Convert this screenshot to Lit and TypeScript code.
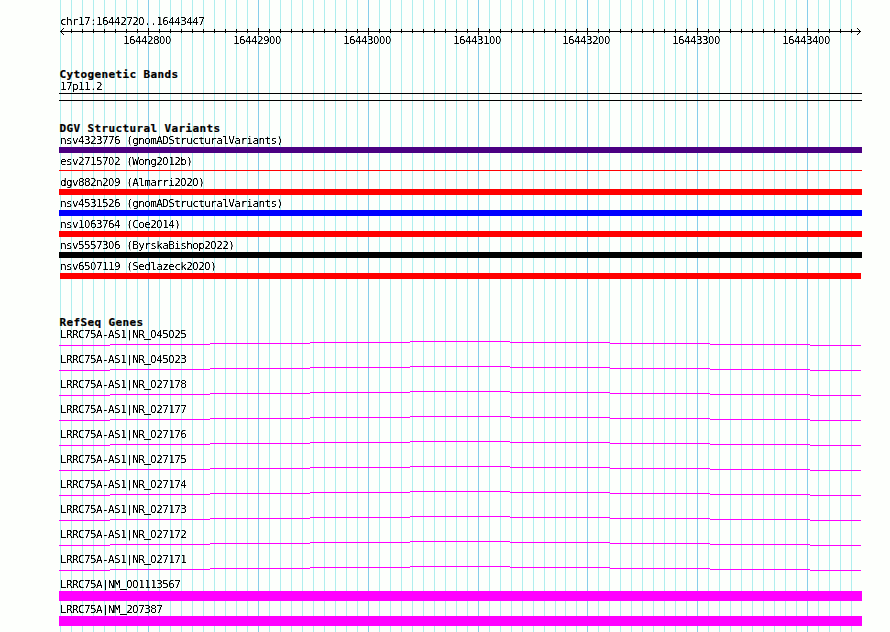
import { LitElement, html, svg, css } from "lit";
import { customElement, property } from "lit/decorators.js";

const GRID = Array.from({ length: 73 }, (_, i) => ({
  x: 60 + 11 * i - (i >= 46 ? 1 : 0),
  major: i % 10 === 8,
}));

const VARIANTS = [
  { name: "nsv4323776 (gnomADStructuralVariants)", kind: "indigo" },
  { name: "esv2715702 (Wong2012b)", kind: "thin" },
  { name: "dgv882n209 (Almarri2020)", kind: "red" },
  { name: "nsv4531526 (gnomADStructuralVariants)", kind: "blue" },
  { name: "nsv1063764 (Coe2014)", kind: "red" },
  { name: "nsv5557306 (ByrskaBishop2022)", kind: "black" },
  { name: "nsv6507119 (Sedlazeck2020)", kind: "red inset" },
];

const TRANSCRIPTS = [
  "045025", "045023", "027178", "027177", "027176",
  "027175", "027174", "027173", "027172", "027171",
].map((id) => "LRRC75A-AS1|NR_" + id);

const GENES = ["LRRC75A|NM_001113567", "LRRC75A|NM_207387"];

// Plain (undotted) zeros and solid underscores inside monospaced text.
const plain = (text: string) =>
  text.split(/([0_])/).filter(Boolean).map((p) =>
    p === "0" ? html`<span class="zero">0</span>` : p === "_" ? html`<span class="under">_</span>` : p);

const textStyles = css`
  .label {
    font: 11px/13px "DejaVu Sans Mono", monospace;
    letter-spacing: -0.61px;
    color: #000;
    white-space: pre;
    height: 13px;
    filter: url(#crisp);
  }
  .zero {
    font-family: "DejaVu Sans";
    font-stretch: condensed;
    letter-spacing: -0.3px;
  }
  .under {
    font-weight: bold;
    position: relative;
    top: -1px;
  }
`;

const crisp = svg`<filter id="crisp" x="0" y="-0.2" width="1" height="1.4" color-interpolation-filters="sRGB">
  <feComponentTransfer><feFuncA type="linear" slope="3" intercept="-0.95"></feFuncA></feComponentTransfer>
</filter>`;

@customElement("scale-ruler")
export class ScaleRuler extends LitElement {
  static styles = [textStyles, css`
    :host { display: block; height: 53px; }
    .defs { position: absolute; }
    .region { padding-left: 60px; }
    .axis { display: block; }
    .numbers { display: flex; padding-left: 123px; }
    .number { width: 110px; flex: none; }
    .number.short { width: 109px; }
  `];
  render() {
    const majors = GRID.filter((g) => g.major);
    return html`
      <svg class="defs" width="0" height="0">${crisp}</svg>
      <div class="label region">${plain("chr17:16442720..16443447")}</div>
      <svg class="axis" width="890" height="6" viewBox="0 28 890 6" overflow="visible" shape-rendering="crispEdges">
        <rect x="60" y="31" width="801" height="1"></rect>
        ${GRID.slice(1).map((g) => g.major
          ? svg`<rect x=${g.x} y="28" width="1" height="7"></rect>`
          : svg`<rect x=${g.x} y="29" width="1" height="4"></rect>`)}
        <path d="M61 30h1v1h-1zM62 29h1v1h-1zM63 28h1v1h-1zM61 32h1v1h-1zM62 33h1v1h-1zM63 34h1v1h-1z"></path>
        <path d="M859 30h1v1h-1zM858 29h1v1h-1zM857 28h1v1h-1zM859 32h1v1h-1zM858 33h1v1h-1zM857 34h1v1h-1z"></path>
      </svg>
      <div class="numbers">
        ${majors.map((_, i) => html`<div class="label number ${i === 3 ? "short" : ""}">${plain(String(16442800 + i * 100))}</div>`)}
      </div>`;
  }
}

@customElement("track-section")
export class TrackSection extends LitElement {
  @property() heading = "";
  static styles = [textStyles, css`
    :host { display: block; width: 803px; }
    .title {
      font: bold 11px/13px "DejaVu Sans Mono", monospace;
      letter-spacing: 0.378px;
      height: 12px;
      padding-left: 0.6px;
      white-space: pre;
      -webkit-text-stroke: 0.2px #000;
    }
  `];
  render() {
    return html`<div class="title">${this.heading}</div><slot></slot>`;
  }
}

@customElement("app-root")
export class AppRoot extends LitElement {
  static styles = [textStyles, css`
    :host {
      display: block;
      position: relative;
      width: 890px;
      height: 632px;
      overflow: hidden;
      background: #fdfffc;
    }
    .grid { position: absolute; inset: 0; }
    .minor { fill: #afeeee; }
    .major { fill: #87ceeb; }
    .content { position: relative; display: flex; flex-direction: column; padding-top: 15px; }
    track-section { margin-left: 59px; }
    .cyto { height: 54px; }
    .dgv { height: 194px; }
    .label { padding-left: 1px; }
    .band { height: 6px; border: solid #000; border-width: 1px 0; }
    .variant { height: 21px; }
    .bar { height: 6px; }
    .indigo { background: #4b0082; }
    .red { background: #f00; }
    .blue { background: #00f; }
    .black { background: #000; }
    .inset { margin: 0 1px; }
    .thin { height: 1px; background: #f00; margin-top: 2px; }
    .gene { height: 25px; }
    .intron { display: block; fill: #f0f; }
    .exon { height: 10px; background: #f0f; }
  `];
  render() {
    return html`
      <svg class="grid" width="890" height="632" shape-rendering="crispEdges">
        ${crisp}
        ${GRID.map((g) => svg`<rect class=${g.major ? "major" : "minor"} x=${g.x} y="0" width="1" height="632"></rect>`)}
      </svg>
      <div class="content">
        <scale-ruler></scale-ruler>
        <track-section class="cyto" heading="Cytogenetic Bands">
          <div class="label">${plain("17p11.2")}</div>
          <div class="band"></div>
        </track-section>
        <track-section class="dgv" heading="DGV Structural Variants">
          ${VARIANTS.map((v) => html`<div class="variant">
            <div class="label">${plain(v.name)}</div>
            <div class="bar ${v.kind}"></div>
          </div>`)}
        </track-section>
        <track-section heading="RefSeq Genes">
          ${TRANSCRIPTS.map((t) => html`<div class="gene">
            <div class="label">${plain(t)}</div>
            <svg class="intron" width="803" height="5" shape-rendering="crispEdges">
              ${[4, 3, 2, 1, 0, 1, 2, 3, 4].map((y, i) => {
                const x = i ? i * 100 - 49 : 0;
                const end = Math.min(i * 100 + 51, 802);
                return svg`<rect x=${x} y=${y} width=${end - x} height="1"></rect>`;
              })}
            </svg>
          </div>`)}
          ${GENES.map((t) => html`<div class="gene">
            <div class="label">${plain(t)}</div>
            <div class="exon"></div>
          </div>`)}
        </track-section>
      </div>`;
  }
}
